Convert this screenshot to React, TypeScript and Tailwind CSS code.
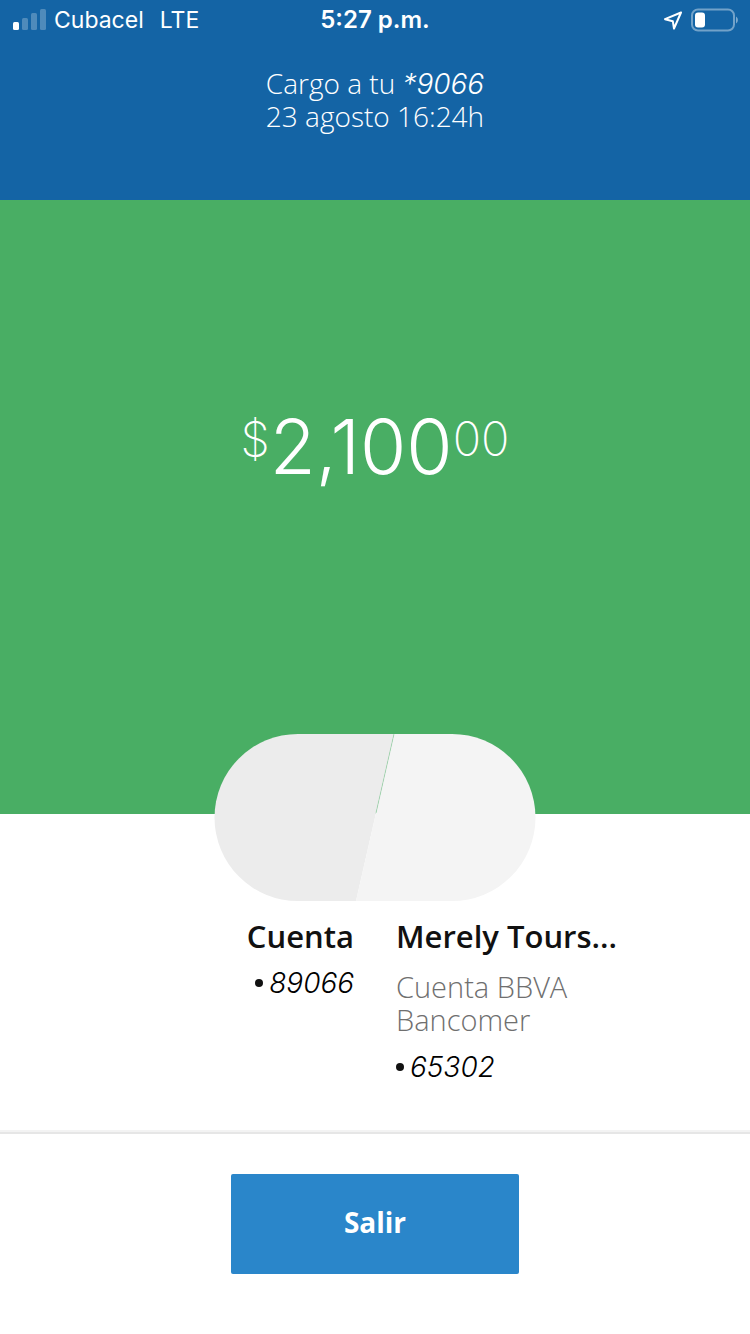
const StatusBar = () => {
  return (
    <div className="grid h-10 grid-cols-3 items-center px-3 font-['Inter',sans-serif] text-[23px] leading-10">
      <div className="flex items-center gap-2 whitespace-nowrap">
        <svg className="h-6 w-[34px] shrink-0" viewBox="0 0 34 24" fill="#fff" aria-hidden="true">
          <rect x="1" y="14" width="6" height="8" rx="1.5" />
          <rect x="10" y="10" width="6" height="12" rx="1.5" opacity=".25" />
          <rect x="19" y="5" width="6" height="17" rx="1.5" opacity=".25" />
          <rect x="28" y="1" width="6" height="21" rx="1.5" opacity=".25" />
        </svg>
        <span>Cubacel</span>
        <span className="ml-2">LTE</span>
      </div>
      <span className="text-center text-2xl leading-10 font-semibold">5:27 p.m.</span>
      <div className="flex items-center justify-end gap-2">
        <svg className="size-5" viewBox="0 0 20 20" fill="none" stroke="#fff" strokeWidth="2" strokeLinejoin="round" aria-hidden="true">
          <path d="M19 2.5 L3 9.2 L10.8 11.2 L12 18.5 Z" />
        </svg>
        <svg className="h-6 w-12" viewBox="0 0 48 24" fill="none" aria-hidden="true">
          <rect x="2" y="1.5" width="42" height="21" rx="6" stroke="#fff" strokeOpacity=".4" strokeWidth="2" />
          <rect x="5" y="4.5" width="10" height="15" rx="3" fill="#fff" />
          <path d="M46 8.5 C48.5 10 48.5 14 46 15.5 Z" fill="#fff" fillOpacity=".45" />
        </svg>
      </div>
    </div>
  );
};

const AccountNumber = ({ value }: { value: string }) => {
  return (
    <p className="flex items-center gap-[6px] text-[28px] leading-8 text-black">
      <span className="size-2 rounded-full bg-[#111]" />
      <em className="font-['Inter',sans-serif] font-light">{value}</em>
    </p>
  );
};

const App = () => {
  return (
    <div className="flex min-h-screen flex-col bg-white font-['Open_Sans',sans-serif] text-[#111]">
      <header className="bg-[#1464a5] pb-[67px] text-white">
        <StatusBar />
        <div className="pt-[27px] text-center text-[28px] leading-[33px] font-light">
          <p>
            Cargo a tu <em className="font-['Inter',sans-serif] leading-none">*9066</em>
          </p>
          <p>23 agosto 16:24h</p>
        </div>
      </header>

      <main className="flex grow flex-col">
        <section className="flex grow items-center justify-center bg-[#49ae64] pb-30 text-white">
          <p className="flex items-start font-['Inter',sans-serif] text-[75px] leading-[74px] font-light">
            <span className="text-[47px] leading-[58px] font-extralight">$</span>
            <span>2,100</span>
            <span className="text-[47px] leading-[58px] font-extralight">00</span>
          </p>
        </section>

        <section className="flex flex-col items-center border-b-2 border-[#f3f3f3] px-10 pb-[47px]">
          <svg className="relative -mt-20 h-[167px] w-[322px]" viewBox="0 0 322 167" aria-hidden="true">
            <path d="M84 0 H180 L142 167 H84 A83.5 83.5 0 0 1 84 0 Z" fill="#ececec" />
            <path d="M180 0 H238 A83.5 83.5 0 0 1 238 167 H142 Z" fill="#f4f4f4" />
            <path d="M180 0 L162 79" stroke="#49ae64" strokeOpacity=".5" strokeWidth=".6" />
          </svg>

          <div className="grid w-full grid-cols-2 gap-[42px] pt-4">
            <div className="flex flex-col items-end gap-3">
              <h2 className="text-[31px] leading-[38px] font-semibold">Cuenta</h2>
              <AccountNumber value="89066" />
            </div>
            <div className="flex max-w-56 flex-col gap-[15px]">
              <h2 className="text-[31px] leading-[38px] font-semibold whitespace-nowrap">Merely Tours...</h2>
              <p className="text-[29px] leading-[33px] font-light text-[#6f6f6f]">Cuenta BBVA Bancomer</p>
              <AccountNumber value="65302" />
            </div>
          </div>
        </section>
      </main>

      <footer className="flex justify-center border-t-2 border-[#e6e6e6] px-10 pt-10 pb-[60px]">
        <button type="button" className="h-[100px] w-72 rounded-[2px] bg-[#2a86ca] pb-1 text-[28px] font-bold text-white">
          Salir
        </button>
      </footer>
    </div>
  );
};

export default App;
